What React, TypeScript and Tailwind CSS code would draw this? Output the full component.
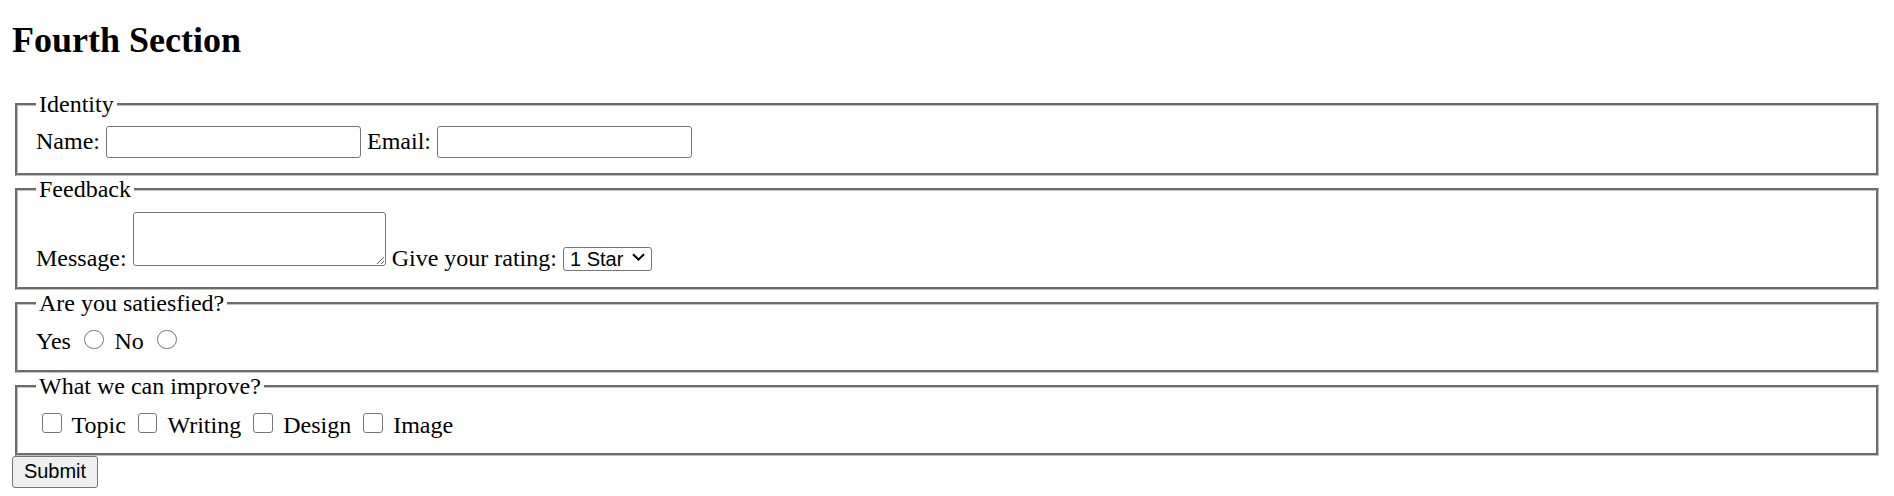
import { useState } from "react";

const fieldsetCls =
  "mx-[3px] border-[3px] [border-style:groove] border-[#c0c0c0] px-[18px] pt-[8.4px]";
const inputCls =
  "h-[32px] w-[255px] rounded-[3px] border border-[#767676] bg-white px-[3px] py-[1.5px] align-baseline font-['Liberation_Sans',Arial,sans-serif] text-[20px] leading-[normal]";
const radioCls =
  "mt-[4.5px] mr-[4.5px] mb-0 ml-[7.5px] h-[19.5px] w-[19.5px] appearance-none rounded-full border-[1.5px] border-[#767676] bg-white align-baseline checked:border-[6px] checked:border-[#0075ff]";
const checkCls =
  "my-[4.5px] mr-[4.5px] ml-[6px] h-[19.5px] w-[19.5px] appearance-none rounded-[3px] border-[1.5px] border-[#767676] bg-white align-[-4.5px] checked:border-[#0075ff] checked:bg-[#0075ff]";

export default function App() {
  const [rating, setRating] = useState("1");

  return (
    <div className="bg-white px-[12px] font-['Liberation_Serif','Times_New_Roman',serif] text-[24px] leading-[normal] text-black">
      <h2 className="mt-[20px] mb-[31px] text-[36px] font-bold leading-[40px]">Fourth Section</h2>
      <form onSubmit={(e) => e.preventDefault()}>
        <fieldset className={`${fieldsetCls} pb-[15px]`}>
          <legend className="px-[3px]">Identity</legend>
          <label htmlFor="name">Name:</label>{" "}
          <input id="name" type="text" className={inputCls} />{" "}
          <label htmlFor="email">Email:</label>{" "}
          <input id="email" type="email" className={inputCls} />
        </fieldset>

        <fieldset className={`${fieldsetCls} pb-[15px]`}>
          <legend className="px-[3px]">Feedback</legend>
          <label htmlFor="message">Message:</label>{" "}
          <textarea
            id="message"
            className="h-[54px] w-[253px] resize rounded-[3px] border border-[#767676] bg-white px-[3px] py-[1.5px] align-baseline font-['Liberation_Mono',monospace] text-[20px] leading-[normal]"
          />{" "}
          <label htmlFor="rating">Give your rating:</label>{" "}
          <span className="relative inline-block">
            <select
              id="rating"
              value={rating}
              onChange={(e) => setRating(e.target.value)}
              className="h-[24px] w-[89px] appearance-none rounded-[3px] border border-[#767676] bg-white pl-[6px] font-['Liberation_Sans',Arial,sans-serif] text-[20px] leading-[normal]"
            >
              <option value="1">1 Star</option>
              <option value="2">2 Stars</option>
              <option value="3">3 Stars</option>
              <option value="4">4 Stars</option>
              <option value="5">5 Stars</option>
            </select>
            <svg
              className="pointer-events-none absolute right-[7px] top-[8px] h-[8px] w-[13px]"
              viewBox="0 0 13 8"
              fill="none"
            >
              <path d="M1 1.2 L6.5 6.5 L12 1.2" stroke="#000" strokeWidth="2" />
            </svg>
          </span>
        </fieldset>

        <fieldset className={`${fieldsetCls} pb-[15px]`}>
          <legend className="px-[3px]">Are you satiesfied?</legend>
          <label htmlFor="yes">Yes</label>{" "}
          <input id="yes" type="radio" name="satisfied" className={radioCls} />{" "}
          <label htmlFor="no">No</label>{" "}
          <input id="no" type="radio" name="satisfied" className={radioCls} />
        </fieldset>

        <fieldset className={`${fieldsetCls} pb-[14px]`}>
          <legend className="px-[3px]">What we can improve?</legend>
          <input id="topic" type="checkbox" className={checkCls} />{" "}
          <label htmlFor="topic">Topic</label>{" "}
          <input id="writing" type="checkbox" className={checkCls} />{" "}
          <label htmlFor="writing">Writing</label>{" "}
          <input id="design" type="checkbox" className={checkCls} />{" "}
          <label htmlFor="design">Design</label>{" "}
          <input id="image" type="checkbox" className={checkCls} />{" "}
          <label htmlFor="image">Image</label>
        </fieldset>

        <button
          type="submit"
          className="h-[32px] w-[86px] rounded-[3px] border border-[#767676] bg-[#efefef] font-['Liberation_Sans',Arial,sans-serif] text-[20px] leading-[normal]"
        >
          Submit
        </button>
      </form>
    </div>
  );
}
